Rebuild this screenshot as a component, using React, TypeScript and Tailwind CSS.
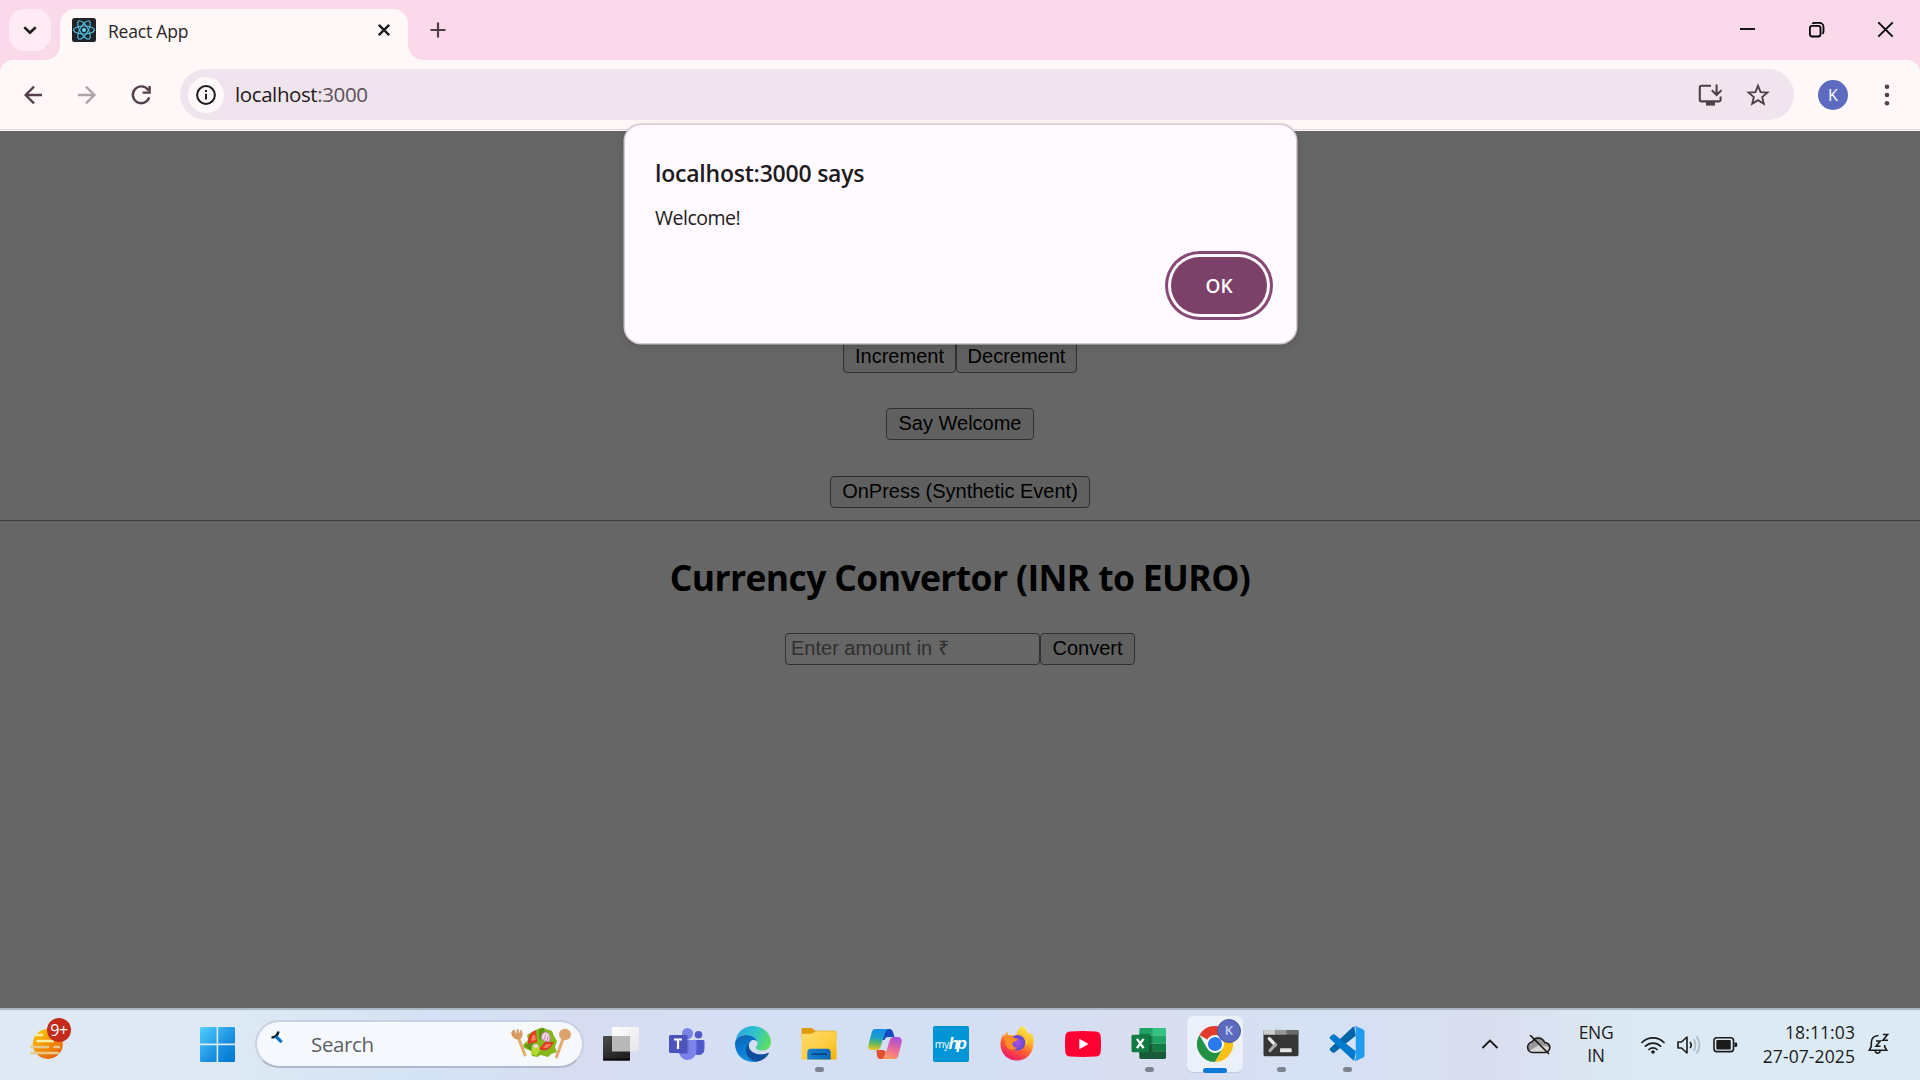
import type { ReactNode } from "react";

const ui = "font-['Open_Sans','Noto_Sans',sans-serif]";
const arial = "font-['Liberation_Sans',Arial,sans-serif]";

/* ---------- browser chrome ---------- */

function ReactLogo() {
  return (
    <svg viewBox="0 0 24 24" className="ml-3 mt-[9px] size-6 shrink-0">
      <rect width="24" height="24" rx="2.5" fill="#20232a" />
      <g fill="none" stroke="#53c1de" strokeWidth="1.1">
        <ellipse cx="12" cy="12" rx="10.4" ry="4" />
        <ellipse cx="12" cy="12" rx="10.4" ry="4" transform="rotate(60 12 12)" />
        <ellipse cx="12" cy="12" rx="10.4" ry="4" transform="rotate(120 12 12)" />
      </g>
      <circle cx="12" cy="12" r="2" fill="#61dafb" />
    </svg>
  );
}

function TabStrip() {
  return (
    <div className="flex h-[60px] shrink-0 bg-[#fadaea]">
      <button className="ml-[9px] mt-[9px] flex size-[42px] items-center justify-center rounded-[15px] bg-[#ffebf3]">
        <svg viewBox="0 0 42 42" className="size-[42px]" fill="none" stroke="#1f1a1c" strokeWidth="2.6">
          <path d="M15.3 18.3 21 23.6 26.7 18.3" />
        </svg>
      </button>
      <div className="-ml-[6px] h-[15px] w-[15px] self-end bg-[radial-gradient(circle_at_0_0,#fadaea_14.5px,#fff8f8_15.2px)]" />
      <div className="mt-[9px] flex w-[348px] rounded-t-[15px] bg-[#fff8f8]">
        <ReactLogo />
        <span className={`ml-3 mt-[10px] text-[17.5px] leading-6 tracking-[-0.2px] text-[#2a2427] ${ui}`}>React App</span>
        <svg viewBox="0 0 14 14" className="ml-auto mr-[17px] mt-[14px] size-[14px]" stroke="#1f1a1c" strokeWidth="2.4">
          <path d="M1.8 1.8 12.2 12.2M12.2 1.8 1.8 12.2" />
        </svg>
      </div>
      <div className="h-[15px] w-[15px] self-end bg-[radial-gradient(circle_at_100%_0,#fadaea_14.5px,#fff8f8_15.2px)]" />
      <svg viewBox="0 0 16 16" className="ml-[7px] mt-[22px] size-4" stroke="#4f3f49" strokeWidth="2.2">
        <path d="M8 .5V15.5M.5 8H15.5" />
      </svg>
      <div className="ml-auto mr-[26px] mt-[21px] flex gap-[52px]">
        <svg viewBox="0 0 17 17" className="size-[17px]" stroke="#000" strokeWidth="1.8">
          <path d="M1 8H16" />
        </svg>
        <svg viewBox="0 0 17 17" className="size-[17px]" fill="none" stroke="#000" strokeWidth="1.8">
          <rect x="1.9" y="4.9" width="10.6" height="10.6" rx="2.2" />
          <path d="M4.4 2.8C5 2 6 1.9 7 1.9H11.5A4 4 0 0 1 15.5 5.9V10.2C15.5 11.4 15.3 12.3 14.5 12.9" />
        </svg>
        <svg viewBox="0 0 17 17" className="size-[17px]" stroke="#000" strokeWidth="1.8">
          <path d="M1.3 1.3 15.7 15.7M15.7 1.3 1.3 15.7" />
        </svg>
      </div>
    </div>
  );
}

function Toolbar() {
  return (
    <div className="shrink-0 bg-[#fadaea]">
      <div className="flex h-[71px] rounded-t-[13px] border-b border-[#fff8f8] bg-[#fff8f8] shadow-[inset_0_-1px_0_#e8dae2]">
        <div className="ml-[21px] mt-[23px] flex gap-[30px]">
          <svg viewBox="0 0 24 24" className="size-6" fill="none" stroke="#54404c" strokeWidth="2.3">
            <path d="M21 12H5M13 3.6 4.6 12 13 20.4" />
          </svg>
          <svg viewBox="0 0 24 24" className="size-6" fill="none" stroke="#aba3a8" strokeWidth="2.3">
            <path d="M3 12H19M11 3.6 19.4 12 11 20.4" />
          </svg>
          <svg viewBox="0 0 24 24" className="size-6" fill="none" stroke="#54404c" strokeWidth="2.4">
            <path d="M19.4 7.4A8.4 8.4 0 1 0 20.2 14.4M20.6 3V9.6H13.6" />
          </svg>
        </div>
        <div className="ml-[27px] mt-[9px] flex h-[51px] w-[1614px] items-center rounded-full bg-[#f0e5ee]">
          <svg viewBox="0 0 36 36" className="ml-[8px] size-9">
            <circle cx="18" cy="18" r="18" fill="#fff8f8" />
            <circle cx="18" cy="18" r="8.9" fill="none" stroke="#1f1a1c" strokeWidth="2" />
            <path d="M18 16.7V22.6M18 13V15.1" stroke="#1f1a1c" strokeWidth="2" />
          </svg>
          <span className={`-mt-0.5 ml-[11px] text-[20.5px] leading-6 tracking-[-0.4px] text-[#1f1a1c] ${ui}`}>
            localhost<span className="text-[#5c4f58]">:3000</span>
          </span>
          <svg viewBox="0 0 24 24" className="ml-auto size-6" fill="none" stroke="#4f3f49" strokeWidth="2.1">
            <path d="M13 2.8H3.4A1.6 1.6 0 0 0 1.8 4.4V16.8A1.6 1.6 0 0 0 3.4 18.4H20.8A1.6 1.6 0 0 0 22.6 16.8V13.6M18.6 1.6V11M13.8 7.2 18.6 12 23.4 7.2" />
            <path d="M8 20.8H17" strokeWidth="3.6" />
          </svg>
          <svg viewBox="0 0 24 24" className="ml-6 mr-6 size-6" fill="none" stroke="#4f3f49" strokeWidth="1.9">
            <path d="M12 2.8 14.6 9.1 21.4 9.6 16.2 14.1 17.8 20.8 12 17.2 6.2 20.8 7.8 14.1 2.6 9.6 9.4 9.1Z" />
          </svg>
        </div>
        <div className={`ml-6 mt-5 flex size-[30px] items-center justify-center rounded-full bg-[#5c6bc0] text-[16px] text-white ${ui}`}>K</div>
        <svg viewBox="0 0 6 24" className="ml-9 mt-[23px] h-6 w-1.5" fill="#54404c">
          <circle cx="3" cy="3.8" r="2.3" />
          <circle cx="3" cy="12" r="2.3" />
          <circle cx="3" cy="20.2" r="2.3" />
        </svg>
      </div>
    </div>
  );
}

/* ---------- page ---------- */

function PageButton({ children, className }: { children: ReactNode; className: string }) {
  return (
    <button className={`flex h-8 items-center justify-center rounded-[4px] border border-[#303030] bg-[#606060] pb-0.5 text-[20px] text-black ${arial} ${className}`}>
      {children}
    </button>
  );
}

function Page() {
  return (
    <main className="flex flex-1 flex-col items-center bg-[#666666]">
      <div className="mt-[210px] flex">
        <PageButton className="w-[113px]">Increment</PageButton>
        <PageButton className="w-[121px]">Decrement</PageButton>
      </div>
      <PageButton className="mt-[35px] w-[148px]">Say Welcome</PageButton>
      <PageButton className="mt-9 w-[260px]">OnPress (Synthetic Event)</PageButton>
      <hr className="mt-3 w-full border-t border-[#3c3c3c]" />
      <h1 className={`mt-[29px] whitespace-nowrap text-[35.5px] font-bold leading-[54px] tracking-[-0.63px] text-black ${ui}`}>
        Currency Convertor (INR to EURO)
      </h1>
      <div className="mt-[29px] flex">
        <input
          placeholder="Enter amount in ₹"
          className={`h-8 w-[255px] rounded-[4px] border border-[#303030] bg-[#666666] px-[5px] pb-px text-[20px] outline-none placeholder:text-[#303030] ${arial}`}
        />
        <PageButton className="w-[95px]">Convert</PageButton>
      </div>
    </main>
  );
}

function AlertDialog() {
  return (
    <div role="alertdialog" className={`absolute left-[625px] top-[125px] flex h-[218px] w-[671px] flex-col rounded-[16px] bg-[#fffaff] pl-[30px] shadow-[0_0_0_1.5px_#d3c8d0,0_2px_8px_rgba(0,0,0,0.2)] ${ui}`}>
      <h2 className="mt-[32px] text-[23px] font-semibold leading-[32px] tracking-[-0.22px] text-[#1f1a1c]">localhost:3000 says</h2>
      <p className="mt-[15px] text-[19.5px] leading-7 tracking-[-0.5px] text-[#1f1a1c]">Welcome!</p>
      <button className="mr-[29px] mt-[25px] flex h-[57px] w-[96px] items-center justify-center self-end rounded-full bg-[#7c4168] pt-0.5 text-[19px] font-semibold text-white shadow-[0_0_0_3px_#fffaff,0_0_0_6px_#864874]">
        OK
      </button>
    </div>
  );
}

/* ---------- taskbar icons ---------- */

function WeatherIcon() {
  return (
    <svg viewBox="0 0 34 34" className="size-[34px]">
      <defs>
        <linearGradient id="sun" x1="0" y1="0" x2="0.6" y2="1">
          <stop offset="0" stopColor="#ffd000" />
          <stop offset="1" stopColor="#e8640c" />
        </linearGradient>
      </defs>
      <circle cx="18.8" cy="18" r="15" fill="url(#sun)" />
      <g strokeWidth="2.6" strokeLinecap="round">
        <path d="M8 9H13M8.500 15H24" stroke="#fff0a8" />
        <path d="M2.300 21H19M25.500 21H30M2.300 27H29" stroke="#e6c98c" />
      </g>
    </svg>
  );
}

function StartIcon() {
  return (
    <svg viewBox="0 0 35 35" className="size-[35px]">
      <defs>
        <linearGradient id="win" x1="0" y1="0" x2="35" y2="35" gradientUnits="userSpaceOnUse">
          <stop offset="0" stopColor="#4fd0ff" />
          <stop offset="0.6" stopColor="#1a8fe0" />
          <stop offset="1" stopColor="#0075d2" />
        </linearGradient>
      </defs>
      <path fill="url(#win)" d="M1.5 0H16.6V16.6H0V1.5Q0 0 1.5 0ZM18.2 0H33.5Q35 0 35 1.5V16.6H18.2ZM0 18.2H16.6V35H1.5Q0 35 0 33.5ZM18.2 18.2H35V33.5Q35 35 33.5 35H18.2Z" />
    </svg>
  );
}

function SaladIcon() {
  return (
    <svg viewBox="0 0 62 36" className="h-9 w-[62px]">
      <g stroke="#e3ac6c" strokeWidth="3" strokeLinecap="round">
        <path d="M8 11 15 29" />
        <path d="M54 10 46.5 31" />
      </g>
      <path d="M1.200 7.500Q1.500 4 4.500 3.500L6 8.500 6.800 3.200 8.600 3.200 9 8 10.500 3.500Q13 5 12.500 9 12 13.500 7.500 13.500 2.500 13 1.200 7.500Z" fill="#d99a61" />
      <ellipse cx="55" cy="8.500" rx="6" ry="5.700" fill="#dca36d" />
      <path d="M22 6 28 3 32 1.500 36 3 42 5 44 10 47 15 45 21 47 26 41 28 38 31 31 29 27 31 22 30 21 25 14 22 13 19 18 14 17 9Z" fill="#86b81c" />
      <path d="M29 3 34 2 35 10 29 14Z" fill="#5c9812" />
      <path d="M14 19 22 17 28 22 21 25Z" fill="#5f921a" />
      <path d="M26 4Q17 7 18 18L27 16Z" fill="#e23c22" />
      <path d="M25 8Q21 10 21 15L26 14Z" fill="#f5805b" />
      <path d="M29 23Q38 28 44 16L35 16Z" fill="#e13a22" />
      <path d="M33 22Q39 23 41 18L36 18Z" fill="#f4805c" />
      <path d="M31 12Q32 5 37 6 42 10 39 16 34 16 31 12Z" fill="#f3dce9" stroke="#ba6b9d" strokeWidth=".8" />
      <path d="M34 14 36 8M37 15 38 10" stroke="#b9699a" strokeWidth=".7" />
      <path d="M22 20 28 19 30 24 26 30 21 27Z" fill="#b6db35" />
      <path d="M22 19 27 18 29 21 25 22Z" fill="#f0d5df" />
    </svg>
  );
}

function TaskViewIcon() {
  return (
    <svg viewBox="0 0 36 36" className="size-9">
      <defs>
        <linearGradient id="tvd" x1="0" y1="0" x2="0.5" y2="1"><stop stopColor="#4c4c4c" /><stop offset="1" stopColor="#202020" /></linearGradient>
        <linearGradient id="tvl" x1="0" y1="0" x2="1" y2="1"><stop stopColor="#fff" /><stop offset="1" stopColor="#e4e4e6" /></linearGradient>
      </defs>
      <rect x="9" y="1" width="27" height="24.500" rx="1" fill="url(#tvl)" />
      <rect x="0" y="10" width="27" height="24.500" rx="1" fill="url(#tvd)" />
      <path d="M0 32.500H27V34Q27 34.500 26 34.500H1Q0 34.500 0 34Z" fill="#080808" />
      <path d="M9 10H26Q27 10 27 11V25.500H9Z" fill="#b9b9b9" />
    </svg>
  );
}

function TeamsIcon() {
  return (
    <svg viewBox="0 0 36 36" className="size-9">
      <circle cx="29.500" cy="8.700" r="3.800" fill="#5059c9" />
      <path d="M25 14H34Q35.500 14 35.500 15.500V23Q35 29 29 29 26 29 24 27Z" fill="#5059c9" />
      <circle cx="18.500" cy="7.500" r="5.500" fill="#7b83eb" />
      <path d="M12 14H27.500V24Q27 33.500 18.500 34 12 33.500 10 27Z" fill="#7b83eb" />
      <path d="M12 9H18Q19.500 9 19.500 11V26Q19.500 28 17.500 28H10V9Z" fill="#4c54b8" opacity=".55" />
      <rect x="0" y="9" width="18" height="18" rx="1.500" fill="#4b53bc" />
      <path d="M5 13.500H13M9 13.500V23" stroke="#fff" strokeWidth="2.200" />
    </svg>
  );
}

function EdgeIcon() {
  return (
    <svg viewBox="0 0 36 36" className="size-9">
      <defs>
        <linearGradient id="e1" x1="0" y1=".3" x2="1" y2=".6"><stop stopColor="#2aa5de" /><stop offset=".5" stopColor="#2fc3cf" /><stop offset="1" stopColor="#5fe05a" /></linearGradient>
        <linearGradient id="e2" x1="0" y1="0" x2=".4" y2="1"><stop stopColor="#0f5faa" /><stop offset=".5" stopColor="#0878d0" /><stop offset="1" stopColor="#1291e0" /></linearGradient>
      </defs>
      <path d="M.6 14C2.500 5.500 9.500 0 18 0 28 0 36 7.500 36 16 36 21.500 32 24.500 27.500 24.500 23 24.500 20.800 22.800 20.800 21.400 20.800 20.400 22.600 19.800 22.600 17 22.600 12.500 17 9 11 9 6 9 2.500 11 .6 14Z" fill="url(#e1)" />
      <path d="M0 18C0 12.500 5 9 11 9 17 9 22.300 12.500 22.600 16.500 21 13.600 17.500 13.400 15.500 15.500 10.500 20 11.500 31 23 35.200 11 38.500 0 30 0 18Z" fill="url(#e2)" />
      <path d="M14.600 16.400C8.500 21 9.500 33.500 21.500 35.700 27 35 31.500 31.500 33.700 27.800 34.200 26.800 33.500 26.500 32.700 26.900 24.500 30.500 14 27 13.800 19.500 13.800 18.300 14 17.300 14.600 16.400Z" fill="#104f9c" />
    </svg>
  );
}

function FolderIcon() {
  return (
    <svg viewBox="0 0 36 36" className="size-9">
      <defs>
        <linearGradient id="fo" x1="0" y1="0" x2="1" y2="1"><stop stopColor="#ffdc6e" /><stop offset=".6" stopColor="#ffcc3e" /><stop offset="1" stopColor="#f5b000" /></linearGradient>
        <linearGradient id="fb" x1="0" y1="0" x2="1" y2="0"><stop stopColor="#1480d2" /><stop offset="1" stopColor="#0a68b6" /></linearGradient>
      </defs>
      <path d="M0 3.500Q0 2 1.500 2H10.500L14.500 5H35Q36 5 36 6.500V12H0Z" fill="#dd9b09" />
      <path d="M0 8H10.500L15 5.500H35Q36 5.500 36 6.500V34.500H0Z" fill="url(#fo)" />
      <path d="M6 34.500V27.500Q6 23.500 9.500 23.500H26.500Q30 23.500 30 27.500V34.500Z" fill="url(#fb)" />
      <path d="M11 29H25" stroke="#06467e" strokeWidth="1.800" strokeLinecap="round" />
    </svg>
  );
}

function CopilotIcon() {
  return (
    <svg viewBox="0 0 36 36" className="size-9">
      <defs>
        <linearGradient id="c1" x1=".4" y1="0" x2=".3" y2="1"><stop stopColor="#178fe6" /><stop offset=".4" stopColor="#1aa0cc" /><stop offset=".7" stopColor="#68b85a" /><stop offset="1" stopColor="#efca1d" /></linearGradient>
        <linearGradient id="c2" x1=".7" y1="0" x2=".4" y2="1"><stop stopColor="#a34fdc" /><stop offset=".5" stopColor="#e5669f" /><stop offset="1" stopColor="#ff9960" /></linearGradient>
      </defs>
      <path d="M17 3H22.500Q25 3 26 6L27.500 11H21Q18.500 11 17.500 14L13 14Z" fill="#1748c4" />
      <path d="M9.500 24H16L19 25.500 16.500 33H12.500Q11 33 10 30Z" fill="#e2502f" />
      <path d="M8 3H21Q18.800 4 17.800 7.500L13.500 21Q12.500 24 9.500 24H4.500Q.5 24 1.400 19L4.500 7Q5.500 3 8 3Z" fill="url(#c1)" />
      <path d="M28 33H15Q17.500 32 18.400 28.500L22.500 15Q23.500 11 26.500 11H31Q35.500 11.500 34.600 16.500L31.500 29Q30.500 33 28 33Z" fill="url(#c2)" />
    </svg>
  );
}

function MyHpIcon() {
  return (
    <div className="flex size-9 items-center justify-center rounded-[2px] bg-[#0096d6] text-white">
      <span className={`text-[10.5px] leading-none tracking-[-0.6px] ${ui}`}>my</span>
      <span className="-mt-0.5 pr-[3px] font-['Liberation_Sans',sans-serif] text-[17px] font-bold italic leading-none tracking-[-2.6px]">hp</span>
    </div>
  );
}

function FirefoxIcon() {
  return (
    <svg viewBox="0 0 36 36" className="size-9">
      <defs>
        <linearGradient id="f1" x1=".8" y1="0" x2=".3" y2="1"><stop stopColor="#fff04a" /><stop offset=".35" stopColor="#ffb62d" /><stop offset=".65" stopColor="#ff5a32" /><stop offset="1" stopColor="#ee146e" /></linearGradient>
        <radialGradient id="f2"><stop stopColor="#a551e8" /><stop offset="1" stopColor="#6048cb" /></radialGradient>
      </defs>
      <path d="M23.500 0C29 4 28.500 8 31 8.500L32 6.500C34 9.500 35 13 34.500 18 34 28 27 34.500 18 34.500 8.500 34.500 1.500 27.500 1.500 18.500 1.500 14 3 10.500 4.200 8L4.800 10.500 8.200 5.200 9 9.200C12 8.500 15 9 17.500 10.500 16.500 5 20.500 2.500 23.500 0Z" fill="url(#f1)" />
      <circle cx="18.500" cy="16.800" r="7.700" fill="url(#f2)" />
      <path d="M5 11C9 9 13 10 15 12L19 13C18 15.500 14.500 15.500 13.500 17.500 13 20 15.500 22 18.500 21.500 14.500 26 7.500 23.500 6.500 18Z" fill="#ff8b23" />
      <path d="M24 8C27 11 28 15 26 19L29 17C29.500 13 27.500 9.500 24 8Z" fill="#ffcf35" />
    </svg>
  );
}

function YoutubeIcon() {
  return (
    <svg viewBox="0 0 36 36" className="size-9">
      <path d="M5 5.400Q18 4.600 31 5.400 35.300 5.800 35.700 10 36.300 18 35.700 26 35.300 30.200 31 30.600 18 31.400 5 30.600 .7 30.200 .3 26-.3 18 .3 10 .7 5.800 5 5.400Z" fill="#ff0033" />
      <path d="M14.300 12.700V23.300L23.500 18Z" fill="#fff" />
    </svg>
  );
}

function ExcelIcon() {
  return (
    <svg viewBox="0 0 36 36" className="size-9">
      <path d="M8 3.500Q8 2 9.500 2H22V10H8Z" fill="#21a366" />
      <path d="M22 2H34Q35.500 2 35.500 3.500V10H22Z" fill="#33c481" />
      <path d="M8 10H22V18H8Z" fill="#107c41" />
      <path d="M22 10H35.500V18H22Z" fill="#21a366" />
      <path d="M22 18H35.500V26H22Z" fill="#107c41" />
      <path d="M8 18H22V26H35.500V32.500Q35.500 34 34 34H9.500Q8 34 8 32.500Z" fill="#185c37" />
      <path d="M8 8H17.500Q19.500 8 19.500 10V26Q19.500 28 17.500 28H8Z" fill="#0c4f2b" opacity=".5" />
      <rect y="9" width="18" height="18" rx="1.500" fill="#107c41" />
      <path d="M5.600 13.200 12.400 22.800M12.400 13.200 5.600 22.800" stroke="#fff" strokeWidth="2.400" />
    </svg>
  );
}

function ChromeIcon() {
  return (
    <div className="relative size-9">
      <svg viewBox="0 0 36 36" className="size-9">
        <path d="M18 18 2.410 9A18 18 0 0 1 33.590 9L18 9Z" fill="#e33b2e" />
        <path d="M2.410 9A18 18 0 0 0 18 36L25.800 22.500 18 18 10.200 22.500Z" fill="#229342" />
        <path d="M33.590 9A18 18 0 0 1 18 36L25.800 22.500Q27.500 14 18 9Z" fill="#fbc116" />
        <circle cx="18" cy="18" r="9" fill="#fff" />
        <circle cx="18" cy="18" r="7.100" fill="#2a79ee" />
      </svg>
      <span className={`absolute left-[20px] top-[-7px] flex size-6 items-center justify-center rounded-full border border-[#4c589e] bg-[#5c6bc0] text-[13px] font-semibold text-[#c8cef0] ${ui}`}>K</span>
    </div>
  );
}

function TerminalIcon() {
  return (
    <svg viewBox="0 0 36 36" className="size-9">
      <rect y="4" width="36" height="27" rx="1.500" fill="#363636" />
      <path d="M1.500 4H12V9H0V5.500Q0 4 1.500 4Z" fill="#cccccc" />
      <path d="M12 4H24V9H12Z" fill="#979797" />
      <path d="M24 4H34.500Q36 4 36 5.500V9H24Z" fill="#686868" />
      <path d="M6 13 12 19.500" stroke="#ececec" strokeWidth="3.400" strokeLinecap="round" />
      <path d="M12.300 19 6.800 25.200" stroke="#aaa" strokeWidth="3.400" strokeLinecap="round" />
      <rect x="17" y="23" width="12" height="4" rx=".7" fill="#e4e4e4" />
    </svg>
  );
}

function VsCodeIcon() {
  return (
    <svg viewBox="0 0 36 36" className="size-9">
      <path d="M25.500 .5 27 10 5.200 27.200Q4 28 2.800 27L.6 25Q-.5 24 .6 22.800L24 1Z" fill="#0065a9" />
      <path d="M25.500 35.500 27 26 5.200 8.800Q4 8 2.800 9L.6 11Q-.5 12 .6 13.200L24 35Z" fill="#007acc" />
      <path d="M25.500 35.700Q27 36.200 28 35.600L34.800 32.400Q36 31.800 36 30.500V5.500Q36 4.200 34.800 3.600L28 .4Q26.500-.2 25.200 1 27 .3 27 2.500V33.500Q27 35.500 25.500 35.700Z" fill="#1f9cf0" />
    </svg>
  );
}

type TaskbarApp = { name: string; icon: ReactNode; state?: "running" | "active" };

const apps: TaskbarApp[] = [
  { name: "Task View", icon: <TaskViewIcon /> },
  { name: "Teams", icon: <TeamsIcon /> },
  { name: "Edge", icon: <EdgeIcon /> },
  { name: "File Explorer", icon: <FolderIcon />, state: "running" },
  { name: "Copilot", icon: <CopilotIcon /> },
  { name: "myHP", icon: <MyHpIcon /> },
  { name: "Firefox", icon: <FirefoxIcon /> },
  { name: "YouTube", icon: <YoutubeIcon /> },
  { name: "Excel", icon: <ExcelIcon />, state: "running" },
  { name: "Chrome", icon: <ChromeIcon />, state: "active" },
  { name: "Terminal", icon: <TerminalIcon />, state: "running" },
  { name: "VS Code", icon: <VsCodeIcon />, state: "running" },
];

function AppSlot({ app }: { app: TaskbarApp }) {
  const active = app.state === "active";
  return (
    <div className="flex w-[66px] justify-center pt-[6px]">
      <div aria-label={app.name} className={`flex h-14 w-14 flex-col items-center rounded-[6px] pt-[10px] ${active ? "bg-[#ebf0f9] shadow-[0_1px_1px_#c2c9dc]" : ""}`}>
        {app.icon}
        {app.state && <div className={active ? "mt-[6px] h-[5px] w-6 shrink-0 rounded-full bg-[#0a7ad9]" : "mt-[6px] h-[5px] w-[9px] shrink-0 rounded-full bg-[#7e848f]"} />}
      </div>
    </div>
  );
}

function Tray() {
  return (
    <div className={`ml-auto flex h-[70px] items-center text-[#1b1b1b] ${ui}`}>
      <svg viewBox="0 0 18 12" className="mr-[27px] mt-[-2px] h-3 w-[18px]" fill="none" stroke="#1b1b1b" strokeWidth="1.900">
        <path d="M1.500 10 9 2.500 16.500 10" />
      </svg>
      <svg viewBox="0 0 26 20" className="h-5 w-[26px]">
        <path d="M6.500 17.500A5.300 5.300 0 0 1 6 7 7 7 0 0 1 18.700 7.500 5 5 0 0 1 19 17.500Z" fill="#d9d7d5" />
        <path d="M2 14Q0 8 6 7 7 1.500 12.500 1.500 17 2 18.700 7.500 23 8 23.500 12L13 10 3 16Z" fill="#999" />
        <path d="M6.500 17.500A5.300 5.300 0 0 1 6 7 7 7 0 0 1 18.700 7.500 5 5 0 0 1 19 17.500Z" fill="none" stroke="#1b1b1b" strokeWidth="1.600" />
        <path d="M4 0 23 19" stroke="#1b1b1b" strokeWidth="1.700" />
      </svg>
      <div className="-mt-[3px] ml-[25px] w-[38px] whitespace-nowrap text-center text-[17.500px] leading-[22.500px] tracking-[-0.300px]">
        <div>ENG</div>
        <div>IN</div>
      </div>
      <svg viewBox="0 0 24 20" className="ml-[26px] h-5 w-6" fill="none" stroke="#1b1b1b" strokeWidth="1.700" strokeLinecap="round">
        <path d="M1 7.500A15.600 15.600 0 0 1 23 7.500M4.500 11.200A10.500 10.500 0 0 1 19.500 11.200M8 14.500A5.800 5.800 0 0 1 16 14.500" />
        <circle cx="12" cy="17" r="1.800" fill="#1b1b1b" stroke="none" />
      </svg>
      <svg viewBox="0 0 24 20" className="ml-3 h-5 w-6" fill="none" stroke="#1b1b1b" strokeWidth="1.600" strokeLinejoin="round">
        <path d="M1 7H4.500L10 2V18L4.500 13H1ZM13 7Q15.500 10 13 13" />
        <path d="M16.500 4Q20.500 10 16.500 16M19.500 1.300Q25.500 10 19.500 18.700" stroke="#aeb7be" />
      </svg>
      <svg viewBox="0 0 25 20" className="ml-3 h-5 w-[25px]">
        <rect x="1" y="2.800" width="19.500" height="13.800" rx="2.800" fill="none" stroke="#1b1b1b" strokeWidth="1.600" />
        <rect x="3.300" y="5" width="14.500" height="9.400" rx="1" fill="#1b1b1b" />
        <path d="M21.500 7.500H23Q24.300 7.500 24.300 9.700 24.300 12 23 12H21.500Z" fill="#1b1b1b" />
      </svg>
      <div className="-mt-[3px] ml-6 w-[93px] whitespace-nowrap text-right text-[17.500px] leading-6 tracking-[0.100px]">
        <div>18:11:03</div>
        <div>27-07-2025</div>
      </div>
      <svg viewBox="0 0 22 22" className="-mt-0.5 ml-[13px] mr-[30px] size-[22px]" fill="none" stroke="#1b1b1b" strokeWidth="1.600">
        <path d="M10.500 2.500Q3.500 3 3.300 9.500V13.500L1.300 17.200H18.700L16.700 14V12M7 18Q9.500 22.500 12.500 18" />
        <path d="M8 8H12.300L8 13.300H12.500M15 1.500H19.600L15 7.300H20" />
      </svg>
    </div>
  );
}

function Taskbar() {
  return (
    <footer className="flex h-[72px] shrink-0 border-t-2 border-[#acb7c4] bg-[linear-gradient(90deg,#dfe9f3_0,#dde9f4_240px,#d3e3f5_420px,#d7dcf1_580px,#d5dff3_740px,#d5dff3_1000px,#d9ddf0_1150px,#d5e1f4_1310px,#d9deef_1490px,#dceaf5_1640px,#dceaf4_1920px)]">
      <div className="relative ml-[29px] mt-4">
        <WeatherIcon />
        <span className={`absolute left-[18px] top-[-8px] flex size-6 items-center justify-center rounded-full bg-[#c42b1c] pb-px text-[16px] leading-none tracking-[-0.300px] text-white ${ui}`}>9+</span>
      </div>
      <div className="ml-[137px] mt-[17px]"><StartIcon /></div>
      <div className="ml-5 mt-[10px] flex h-[48px] w-[329px] items-center rounded-full border-2 border-[#c8d1e2] border-b-[#aeb8c9] bg-[#f5f9fd]">
        <svg viewBox="0 0 12 12" className="mb-[14px] ml-[14px] size-3" fill="none" strokeWidth="2.600">
          <path d="M.5 6.500Q6 6.500 7.500 .5" stroke="#15202b" />
          <path d="M5 5.500 10.700 11.200" stroke="#0872cf" strokeWidth="3.200" />
        </svg>
        <span className={`ml-7 text-[20.500px] tracking-[-0.350px] text-[#5c5f63] ${ui}`}>Search</span>
        <div className="ml-auto mr-[10px]"><SaladIcon /></div>
      </div>
      <div className="ml-1 flex">
        {apps.map((app) => (
          <AppSlot key={app.name} app={app} />
        ))}
      </div>
      <Tray />
    </footer>
  );
}

export default function App() {
  return (
    <div className="relative flex h-[1080px] w-[1920px] flex-col overflow-hidden">
      <TabStrip />
      <Toolbar />
      <Page />
      <AlertDialog />
      <Taskbar />
    </div>
  );
}
